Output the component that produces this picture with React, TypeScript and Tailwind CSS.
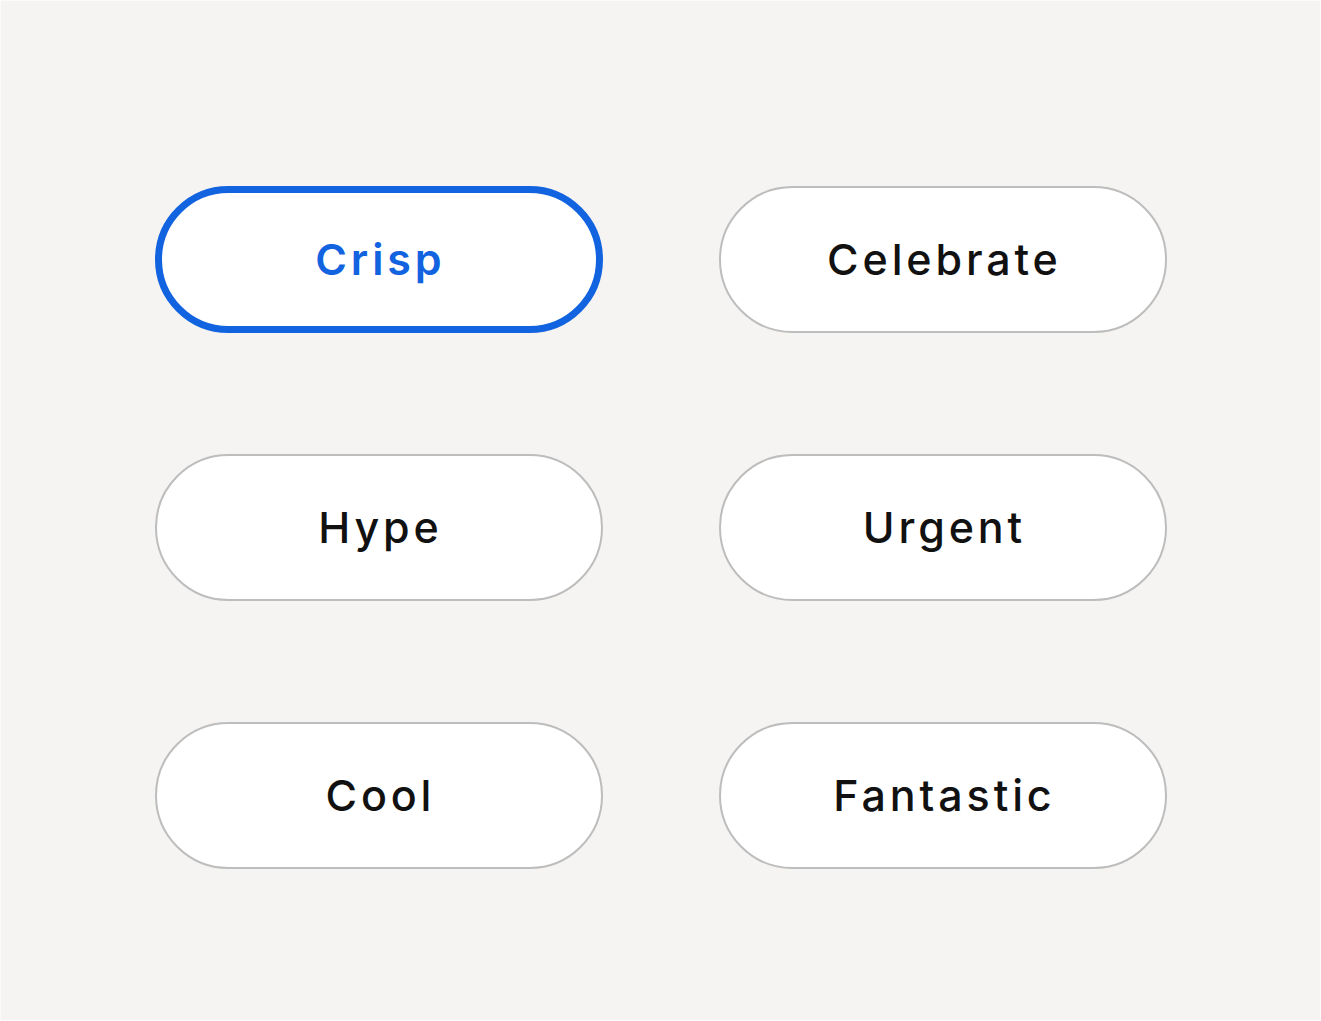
import React from "react";

// ─── Tone picker ──────────────────────────────────────────────────────────────

const TONES = ["Crisp", "Celebrate", "Hype", "Urgent", "Cool", "Fantastic"];

export default function App() {
  const selected = "Crisp";

  return (
    <div
      className="w-[1321px] h-[1021px] bg-[#f5f4f2] border border-[#fbfbfa] flex justify-center pt-[185px]"
      style={{ fontFamily: "Inter, 'Open Sans', sans-serif" }}
    >
      <div className="grid grid-cols-[448px_448px] gap-x-[116px] gap-y-[121px] content-start">
        {TONES.map((tone) => {
          const active = tone === selected;
          return (
            <button
              key={tone}
              className={`h-[147px] rounded-full bg-white flex items-center justify-center pl-[0.09em] text-[43px] tracking-[0.09em] ${
                active
                  ? "border-[7px] border-[#1263e0] text-[#1263e0] font-semibold"
                  : "border-2 border-[#bdbdbd] text-[#111111] font-medium"
              }`}
            >
              {tone}
            </button>
          );
        })}
      </div>
    </div>
  );
}
